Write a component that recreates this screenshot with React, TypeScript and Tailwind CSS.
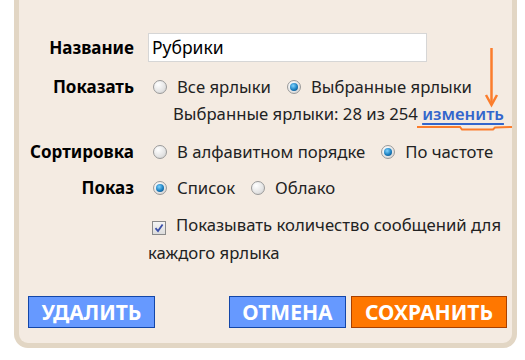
import React from "react";

const font = { fontFamily: '"Noto Sans", "DejaVu Sans", sans-serif' };

function Radio({ checked }: { checked?: boolean }) {
  return (
    <span className="inline-flex h-[14px] w-[14px] shrink-0 items-center justify-center rounded-full border border-[#9a9a9a] bg-[radial-gradient(circle_at_35%_30%,#ffffff,#e4e4e4_60%,#c9c9c9)]">
      {checked && (
        <span className="h-[8px] w-[8px] rounded-full bg-[radial-gradient(circle_at_40%_35%,#7fd3ff,#1a7fc0_55%,#0b3e6e)]" />
      )}
    </span>
  );
}

function Opt({ checked, label }: { checked?: boolean; label: string }) {
  return (
    <span className="inline-flex items-center gap-[10px]">
      <Radio checked={checked} />
      <span>{label}</span>
    </span>
  );
}

export default function App() {
  return (
    <div className="relative h-[360px] w-[525px] bg-white text-[16.7px] text-[#222]" style={font}>
      <div className="ml-[14px] w-[503px] rounded-b-[14px] border-x-[5px] border-b-[5px] border-[#e2d6c4] bg-[#f4ebe2] pb-[15px]">
        <div className="pt-[33px]">
          <div className="flex h-[29px] items-center">
            <div className="w-[115px] text-right text-[17px] font-bold text-black">Название</div>
            <div className="ml-[14px] flex h-[29px] w-[279px] items-center border border-[#d6d6d6] bg-white px-[3px] text-[17.5px] text-black">
              Рубрики
            </div>
          </div>
          <div className="mt-[13px] flex h-[24px] items-center">
            <div className="w-[115px] text-right text-[17px] font-bold text-black">Показать</div>
            <div className="ml-[19px] flex items-center gap-[16px]">
              <Opt label="Все ярлыки" />
              <Opt checked label="Выбранные ярлыки" />
            </div>
          </div>
          <div className="mt-[3px] flex h-[24px] items-center">
            <div className="ml-[154px]">
              Выбранные ярлыки: 28 из 254{" "}
              <span className="font-semibold text-[#3366cc] underline decoration-2 underline-offset-[3px]">изменить</span>
            </div>
          </div>
          <div className="mt-[14px] flex h-[24px] items-center">
            <div className="w-[115px] text-right text-[17px] font-bold text-black">Сортировка</div>
            <div className="ml-[19px] flex items-center gap-[16px]">
              <Opt label="В алфавитном порядке" />
              <Opt checked label="По частоте" />
            </div>
          </div>
          <div className="mt-[12px] flex h-[24px] items-center">
            <div className="w-[115px] text-right text-[17px] font-bold text-black">Показ</div>
            <div className="ml-[19px] flex items-center gap-[16px]">
              <Opt checked label="Список" />
              <Opt label="Облако" />
            </div>
          </div>
          <div className="mt-[11px] ml-[129px] w-[365px] leading-[28px]">
            <span className="relative top-[2px] mr-[10px] ml-[4px] inline-flex h-[14px] w-[14px] items-center justify-center border border-[#8a8a8a] bg-[linear-gradient(#f4f4f4,#dcdcdc)] align-baseline">
              <svg width="10" height="10" viewBox="0 0 10 10">
                <path d="M1.5 5.2 L4 8 L8.6 1.5" fill="none" stroke="#3a4fa8" strokeWidth="1.8" />
              </svg>
            </span>
            Показывать количество сообщений для каждого ярлыка
          </div>
        </div>
        <div className="mt-[29px] flex items-center pl-[9px] pr-[5px]">
          <button className="h-[32px] w-[127px] border border-[#1346a8] bg-[#6699ff] text-[21px] font-bold leading-none text-white">
            УДАЛИТЬ
          </button>
          <div className="flex-1" />
          <button className="h-[32px] w-[117px] border border-[#1346a8] bg-[#6699ff] text-[21px] font-bold leading-none text-white">
            ОТМЕНА
          </button>
          <button className="ml-[5px] h-[32px] w-[156px] border border-[#a84000] bg-[#ff7700] text-[21px] font-bold leading-none text-white">
            СОХРАНИТЬ
          </button>
        </div>
      </div>
      <svg className="pointer-events-none absolute left-0 top-0" width="525" height="360">
        <path d="M491.5 48 L491.5 104" stroke="#fb7d2c" strokeWidth="2.5" fill="none" />
        <path d="M486 95 L491.5 105 L497 95" stroke="#fb7d2c" strokeWidth="2.5" fill="none" />
        <path d="M417 127 L460 127 L462 129.5 L493 129.5 L495 127.5 L512 127" stroke="#fb7d2c" strokeWidth="2" fill="none" />
      </svg>
    </div>
  );
}
